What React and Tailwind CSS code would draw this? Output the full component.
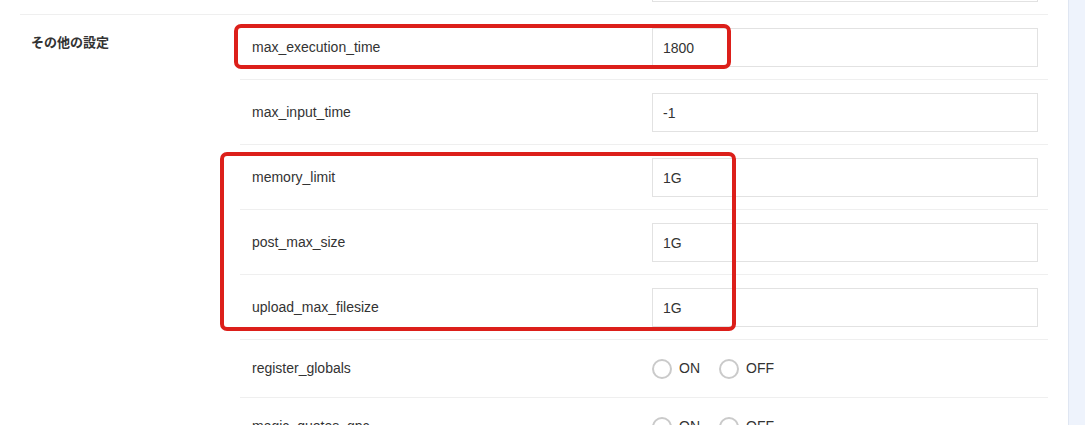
import { useState } from "react";

const textRows = [
  { name: "max_execution_time", value: "1800" },
  { name: "max_input_time", value: "-1" },
  { name: "memory_limit", value: "1G" },
  { name: "post_max_size", value: "1G" },
  { name: "upload_max_filesize", value: "1G" },
];

const radioRows = ["register_globals", "magic_quotes_gpc"];

function TextRow({ name, value, last }) {
  return (
    <div className={`flex items-center pl-3 pr-[10px] pt-[13px] pb-[12px] ${last ? "" : "border-b border-[#efefef]"}`}>
      <div className="w-[400px] text-[14px] text-[#333]">{name}</div>
      <input
        defaultValue={value}
        className="h-[39px] w-[386px] border border-[#e2e2e2] px-[10px] text-[14px] text-[#333] outline-none"
      />
    </div>
  );
}

function RadioRow({ name }) {
  const [val, setVal] = useState(null);
  return (
    <div className="flex items-center pl-3 pr-[10px] py-[18px] border-b border-[#efefef]">
      <div className="w-[400px] text-[14px] text-[#333]">{name}</div>
      <div className="flex items-center text-[14px] text-[#333]">
        {["ON", "OFF"].map((opt) => (
          <label key={opt} className="mr-[19px] flex cursor-pointer items-center gap-[7px]" onClick={() => setVal(opt)}>
            <span className="flex h-[20px] w-[20px] items-center justify-center rounded-full border-2 border-[#cacaca]">
              {val === opt && <span className="h-[8px] w-[8px] rounded-full bg-[#3b82f6]" />}
            </span>
            {opt}
          </label>
        ))}
      </div>
    </div>
  );
}

export default function App() {
  return (
    <div className="relative flex h-[425px] w-[1090px] overflow-hidden bg-white font-['Liberation_Sans',Arial,sans-serif]">
      <div className="w-[1068px] pl-5 pr-5">
        {/* tail of the previous section */}
        <div className="-mt-[50px] flex border-b border-[#efefef]">
          <div className="w-[220px]" />
          <div className="flex-1">
            <TextRow name="" value="" last />
          </div>
        </div>

        {/* その他の設定 */}
        <div className="flex">
          <div className="w-[220px] pl-[11px] pt-[17px] text-[13px] font-bold text-[#333] font-['Noto_Sans_CJK_JP',sans-serif]">
            その他の設定
          </div>
          <div className="flex-1">
            {textRows.map((r) => (
              <TextRow key={r.name} name={r.name} value={r.value} />
            ))}
            {radioRows.map((r) => (
              <RadioRow key={r} name={r} />
            ))}
          </div>
        </div>
      </div>

      {/* scrollbar area */}
      <div className="h-full w-[17px] border-l border-[#dfe6f2] bg-[#eef3fc]" />

      {/* annotations */}
      <div className="pointer-events-none absolute left-[234px] top-[24px] h-[45px] w-[497px] rounded-[7px] border-4 border-[#dc1f1a]" />
      <div className="pointer-events-none absolute left-[220px] top-[152px] h-[179px] w-[516px] rounded-[7px] border-4 border-[#dc1f1a]" />
    </div>
  );
}
